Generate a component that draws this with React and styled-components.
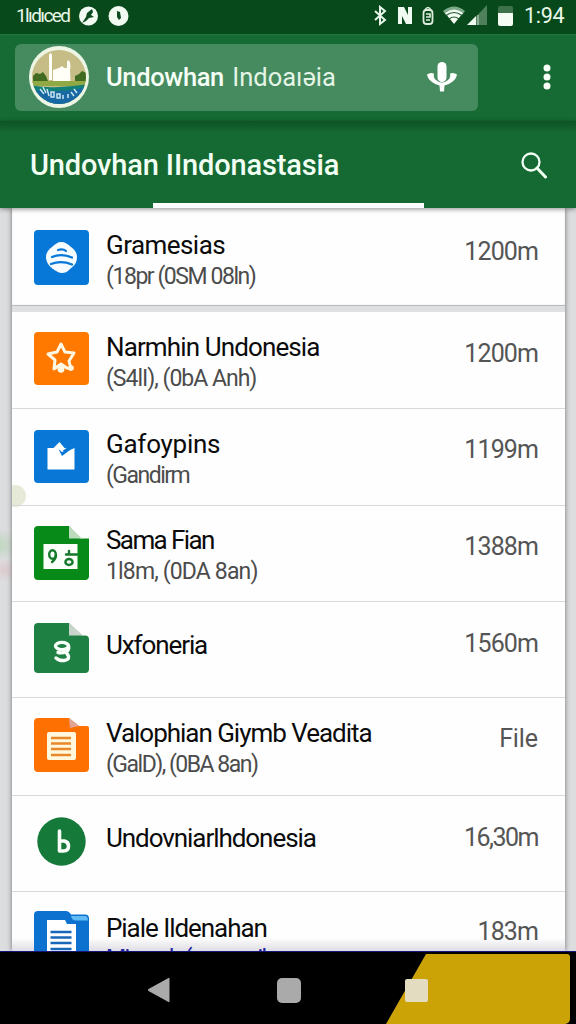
import React from 'react';
import styled, { createGlobalStyle } from 'styled-components';

const GlobalStyle = createGlobalStyle`
    * {
        box-sizing: border-box;
    }
    body {
        margin: 0;
        font-family: Roboto, "Liberation Sans", sans-serif;
        background: #dcdddf;
    }
`;

const files = [
    { icon: 'globe', title: 'Gramesias', sub: '(18pr (0SM 08ln)', size: '1200m', height: 104, track: -0.55, subTrack: -1.45, iconTop: 22, pad: 22, sizeTop: 28, gap: true },
    { icon: 'star', title: 'Narmhin Undonesia', sub: '(S4lI), (0bA Anh)', size: '1200m', height: 97, track: -0.88, subTrack: -1, iconTop: 20 },
    { icon: 'image', title: 'Gafoypins', sub: '(Gandirm', size: '1199m', height: 97, track: -0.25, subTrack: -1.5, iconTop: 21, sizeTop: 25 },
    { icon: 'sheet', title: 'Sama Fian', sub: '1l8m, (0DA 8an)', size: '1388m', height: 96, track: -1.6, subTrack: -0.85, iconTop: 20, pad: 19, sizeTop: 25 },
    { icon: 'script', title: 'Uxfoneria', size: '1560m', height: 96, track: -1.1, iconTop: 21, pad: 28, sizeTop: 26 },
    { icon: 'doc', title: 'Valophian Giymb Veadita', sub: '(GalD), (0BA 8an)', size: 'File', height: 98, track: -1.03, subTrack: -1.5, sizeTrack: -0.1, iconTop: 20, sizeTop: 25 },
    { icon: 'letter', title: 'Undovniarlhdonesia', size: '16,30m', height: 96, track: -1.06, sizeTrack: -1.5, iconTop: 21, pad: 27, sizeTop: 26 },
    { icon: 'folder', title: 'Piale Ildenahan', sub: 'Minamb (man anil', size: '183m', height: 59, track: -1.05, subTrack: -1.6, iconTop: 19, pad: 21, sizeTop: 24, link: true },
];

function FileIcon({ type }) {
    switch (type) {
        case 'globe':
            return (
                <svg width="55" height="55" viewBox="0 0 55 55">
                    <rect width="55" height="55" rx="4" fill="#0878d8" />
                    <path d="M27 12c4 0 7 2 10 5 4 3 6 6 6 10 0 6-3 9-7 12-3 3-5 4-8 4s-6-2-9-4c-4-3-7-7-7-12 0-4 2-7 6-10 3-3 6-5 9-5z" fill="#f6fcff" />
                    <path d="M24 20q5-1.500 8 1M18 27q9-4 20 .5M17 34q10-4 21 .5" fill="none" stroke="#0878d8" strokeWidth="2.200" strokeLinecap="round" />
                </svg>
            );
        case 'star':
            return (
                <svg width="55" height="53" viewBox="0 0 55 53">
                    <rect width="55" height="53" rx="4" fill="#ff7800" />
                    <path d="M27 12l4 8 9 1-5 8 2 8-4-1-6-4-7 5 1-9-7-6 9-2z" fill="none" stroke="#fff8e4" strokeWidth="3" strokeLinejoin="round" />
                    <ellipse cx="27" cy="37" rx="3.500" ry="3.800" fill="#fff8e4" />
                    <circle cx="37" cy="36" r="2.800" fill="#fff8e4" />
                </svg>
            );
        case 'image':
            return (
                <svg width="55" height="53" viewBox="0 0 55 53">
                    <rect width="55" height="53" rx="4" fill="#0877d5" />
                    <path d="M13.500 18h6l6-6 5 6h2l-4 3 3 1 9-4v21.500h-27z" fill="#fff" />
                    <path d="M24.500 19l3.500 3 12-5-12 9z" fill="#0877d5" />
                </svg>
            );
        case 'sheet':
            return (
                <svg width="55" height="54" viewBox="0 0 55 54">
                    <path d="M4 0h31l11 12.500h9V50a4 4 0 0 1-4 4H4a4 4 0 0 1-4-4V4a4 4 0 0 1 4-4z" fill="#078a17" />
                    <path d="M35 0l13 12.500H35z" fill="#bddcbd" />
                    <path d="M9.500 18h34v25h-34z" fill="#fafffa" />
                    <g fill="none" stroke="#15792c" strokeWidth="2.400" strokeLinecap="round">
                        <ellipse cx="18.500" cy="28.500" rx="3.300" ry="4.300" />
                        <path d="M22 29q0 4-4 7" />
                        <path d="M35 25v3M32 28.500h11" />
                        <ellipse cx="35" cy="36" rx="3.600" ry="3" />
                    </g>
                </svg>
            );
        case 'script':
            return (
                <svg width="55" height="50" viewBox="0 0 55 50">
                    <path d="M4 0h31l13 12.500h3a4 4 0 0 1 4 4V46a4 4 0 0 1-4 4H4a4 4 0 0 1-4-4V4a4 4 0 0 1 4-4z" fill="#1e8043" />
                    <path d="M35 0l14 12.500H35z" fill="#c8d5cb" />
                    <g fill="none" stroke="#f8fff9" strokeWidth="3.400" strokeLinecap="round">
                        <ellipse cx="28" cy="23" rx="6.500" ry="3.600" />
                        <path d="M34.500 23q1 4-2.500 6-4 1.500-8 .5M22 35q3 3 8 2.500 5-.5 4.500-4-.5-2-2.500-4" />
                    </g>
                </svg>
            );
        case 'doc':
            return (
                <svg width="55" height="54" viewBox="0 0 55 54">
                    <path d="M4 0h31l10 8h8a2 2 0 0 1 2 2v40a4 4 0 0 1-4 4H4a4 4 0 0 1-4-4V4a4 4 0 0 1 4-4z" fill="#ff7003" />
                    <path d="M35 0l10 8-9 2z" fill="#dfa695" />
                    <rect x="13" y="14" width="29" height="28" rx="2" fill="#fff8dc" />
                    <path d="M17 20h20M17 25.500h20M17 31h20M17 37h20" stroke="#e9872b" strokeWidth="2.300" />
                </svg>
            );
        case 'letter':
            return (
                <svg width="49" height="49" viewBox="0 0 49 49">
                    <circle cx="24.500" cy="24.500" r="24.200" fill="#15793a" />
                    <path d="M22.500 14v20M22.500 24h5q4 1 4 5 0 5-5 5h-4" fill="none" stroke="#f7fff8" strokeWidth="3.600" strokeLinecap="round" strokeLinejoin="round" />
                </svg>
            );
        default:
            return (
                <svg width="55" height="55" viewBox="0 0 55 55">
                    <path d="M4 0h28q3 0 5 3.500h14a4 4 0 0 1 4 4V55H0V4a4 4 0 0 1 4-4z" fill="#0d71cf" />
                    <path d="M37 5h15q2 1 2 4.500H42q-4 0-5-4.500z" fill="#62bbf5" />
                    <path d="M13 9h18l2 4h9v42H13z" fill="#fff" />
                    <path d="M16.500 21h21M16.500 26.500h21M16.500 32h21M16.500 38h21" stroke="#1768b8" strokeWidth="2.300" />
                </svg>
            );
    }
}

function Logo() {
    return (
        <svg width="60" height="62" viewBox="0 0 60 62">
            <defs>
                <clipPath id="logoClip">
                    <circle cx="30" cy="31" r="27" />
                </clipPath>
            </defs>
            <ellipse cx="30" cy="31" rx="30" ry="31" fill="#edf5e4" />
            <g clipPath="url(#logoClip)">
                <rect width="60" height="62" fill="#c6bd86" />
                <path d="M4 35v-5l3-3 4 1 3-2 3 4 2 5zM46 35v-5l4-2 3-3 7 3v7z" fill="#426b22" />
                <path d="M0 35h60v5H0z" fill="#91a944" />
                <path d="M20 9q1.500-4 3 0v25h-3zM24 24l6-2 3-2 2 2h3v-6l1-2 2 2 .5 5-.5 3 .5 11H24z" fill="#fffff8" />
                <path d="M0 39q15 3 30 2t30-3v24H0z" fill="#138078" />
                <path d="M0 42q12 4 28 3 18 0 32-5v24H0z" fill="#1868a3" />
            </g>
            <path d="M11 43l4 5M14 41l3 6M18 43l2 7M22 46h3v5h-3zM28 48h3v4h-3zM34 49v4M39 48v4M42 46l3 4M45 43l3 4" fill="none" stroke="#c9e4ef" strokeWidth="1.500" />
        </svg>
    );
}

function StatusIcons() {
    return (
        <svg width="114" height="22" viewBox="0 0 114 22" fill="none">
            {/* bluetooth */}
            <path d="M1 6l10 9-5 4V2l5 4L1 15" stroke="#e8f4e8" strokeWidth="2" />
            {/* nfc */}
            <path d="M24 2h6l4 8V2h4v17h-6l-4-8v8h-4z" fill="#f0faf0" />
            {/* lock */}
            <rect x="49.500" y="5" width="9" height="14" rx="3" stroke="#dceddc" strokeWidth="1.800" />
            <path d="M51 5q3-5 6 0M52 9h4v3h-4M52 15h4" stroke="#dceddc" strokeWidth="1.600" />
            {/* wifi */}
            <path d="M69 6Q80-3 91 6l-3 4Q80 3 72 10z" fill="#7ca987" />
            <path d="M71 8Q80 1 89 8L80 19z" fill="#f3fbf3" />
            <path d="M72 10.500q8-6 16 0M75 14q5-4 10 0" stroke="#28613a" strokeWidth="1.200" />
            {/* signal */}
            <path d="M113 0v20H94z" fill="#4d805b" />
            <path d="M102 11v9h-9z" fill="#f1faf1" />
            <path d="M104 10v10" stroke="#8eae94" strokeWidth="2" />
        </svg>
    );
}

function App() {
    return (
        <Screen>
            <GlobalStyle />
            <StatusBar>
                <Carrier>1lıdıced</Carrier>
                <svg width="50" height="20" viewBox="0 0 50 20">
                    <circle cx="9.500" cy="10" r="9.500" fill="#f1fbf1" />
                    <path d="M3 17l4-6 1-4 5-4 1 3-2 3 3 2-5 1-3 3z" fill="#0b491e" />
                    <circle cx="39.500" cy="10" r="10" fill="#f1fbf1" />
                    <path d="M38 5l3 1 1 6-2 2-2-3z" fill="#0b491e" />
                </svg>
                <Spacer />
                <StatusIcons />
                <Battery />
                <Clock>1:94</Clock>
            </StatusBar>
            <Toolbar>
                <SearchBox>
                    <Logo />
                    <SearchText>
                        <b>Undowhan</b> Indoaıəia
                    </SearchText>
                    <svg width="30" height="32" viewBox="0 0 30 32">
                        <rect x="10.500" y="1" width="9" height="20" rx="4.500" fill="#fff" />
                        <path d="M0 13.500q3-2.500 7-1-1 4 2 6.500t6 2.500 6-2.500q3-2.500 2-6.500 4-1.500 7 1-1 5-5 7.500-3 2.500-7.500 3.500l-.5 6h-4l-.5-6q-4.500-1-7.500-3.500-4-2.500-5-7.500z" fill="#fff" />
                    </svg>
                </SearchBox>
                <svg width="8" height="26" viewBox="0 0 8 26" fill="#f7fff7">
                    <circle cx="4" cy="4" r="3.500" />
                    <circle cx="4" cy="13" r="3.500" />
                    <circle cx="4" cy="22" r="3.500" />
                </svg>
            </Toolbar>
            <TabBar>
                <TabRow>
                    <TabTitle>Undovhan IIndonastasia</TabTitle>
                    <svg width="26" height="27" viewBox="0 0 26 27" fill="none" stroke="#f1fff3">
                        <circle cx="10" cy="10" r="8.500" strokeWidth="2.300" />
                        <path d="M16 16l8.500 9" strokeWidth="3" strokeLinecap="round" />
                    </svg>
                </TabRow>
                <Indicator />
            </TabBar>
            <Body>
                <List>
                    {files.map((file) => (
                        <Row key={file.title} $height={file.height} $gap={file.gap}>
                            <IconCell $top={file.iconTop}>
                                <FileIcon type={file.icon} />
                            </IconCell>
                            <Info $top={file.pad}>
                                <Title $track={file.track}>{file.title}</Title>
                                {file.sub && (
                                    <Sub $track={file.subTrack} $link={file.link}>
                                        {file.sub}
                                    </Sub>
                                )}
                            </Info>
                            <Size $top={file.sizeTop} $track={file.sizeTrack}>
                                {file.size}
                            </Size>
                        </Row>
                    ))}
                </List>
            </Body>
            <NavBar>
                <NavCorner />
                <svg width="22" height="26" viewBox="0 0 22 26">
                    <path d="M21.500 1.500v23q0 1-1 .5L.5 14q-1-1 0-2l20-11q1-.5 1 .5z" fill="#aaa" />
                </svg>
                <NavHome />
                <NavRecent />
            </NavBar>
        </Screen>
    );
}

const Screen = styled.div`
    width: 576px;
    height: 1024px;
    overflow: hidden;
    display: flex;
    flex-direction: column;
`;

const StatusBar = styled.div`
    height: 34px;
    flex: none;
    display: flex;
    align-items: center;
    padding: 0 10px 3px 16px;
    background: #07491a;
    color: #e9f7e9;
`;

const Carrier = styled.span`
    width: 63px;
    font-size: 19px;
    letter-spacing: -1.6px;
    white-space: nowrap;
`;

const Spacer = styled.div`
    flex: 1;
`;

const Battery = styled.div`
    width: 15px;
    height: 20px;
    margin: 0 11px 0 10px;
    border-radius: 2px;
    background: linear-gradient(#3c7149 35%, #f4fcf4 35%);
`;

const Clock = styled.span`
    width: 42px;
    font-size: 21.5px;
    letter-spacing: -0.3px;
`;

const Toolbar = styled.div`
    height: 87px;
    flex: none;
    display: flex;
    align-items: center;
    justify-content: space-between;
    padding: 0 25px 2px 15px;
    background: #156b33;
    border-top: 1px solid #20773a;
`;

const SearchBox = styled.div`
    width: 463px;
    height: 67px;
    display: flex;
    align-items: center;
    padding: 0 21px 0 14px;
    border-radius: 6px;
    background: #468b5f;
`;

const SearchText = styled.div`
    flex: 1;
    padding-left: 17px;
    font-size: 25.5px;
    color: #e4f5e6;
    white-space: nowrap;
    b {
        font-weight: 500;
        letter-spacing: -0.35px;
        margin-right: 2px;
        color: #f6fff6;
    }
`;

const TabBar = styled.div`
    position: relative;
    z-index: 1;
    height: 87px;
    flex: none;
    display: flex;
    flex-direction: column;
    justify-content: space-between;
    background: linear-gradient(#0e5325, #156933 12px);
    box-shadow: 0 1px 5px rgba(0, 0, 0, 0.45);
`;

const TabRow = styled.div`
    display: flex;
    justify-content: space-between;
    align-items: center;
    padding: 26px 29px 0 30px;
`;

const TabTitle = styled.h1`
    margin: 0;
    font-size: 29px;
    line-height: 36px;
    font-weight: 500;
    letter-spacing: -0.15px;
    color: #f2fff3;
    white-space: nowrap;
`;

const Indicator = styled.div`
    width: 271px;
    height: 5px;
    margin-left: 153px;
    background: #fff;
`;

const Body = styled.div`
    height: 743px;
    flex: none;
    padding: 0 11px 0 12px;
    overflow: hidden;
    background:
        radial-gradient(circle at 0 337px, #c5d8c5 4px, transparent 16px),
        radial-gradient(circle at 5px 362px, #dccdd0 2px, transparent 12px),
        #dcdddf;
`;

const List = styled.div`
    background:
        linear-gradient(transparent 730px, #dddde4 743px),
        radial-gradient(circle at 3px 288px, #e6e9d8 10px, transparent 12px),
        #fefefe;
    box-shadow: 0 0 5px rgba(0, 0, 0, 0.5);
`;

const Row = styled.div`
    height: ${(p) => p.$height}px;
    display: flex;
    align-items: flex-start;
    padding: 0 27px 0 22px;
    overflow: hidden;
    border-bottom: ${(p) => (p.$gap ? '6px solid #dfe0e2' : '1px solid #d9d9dc')};
    box-shadow: ${(p) => (p.$gap ? 'inset 0 -1px 1px #b5b5b8' : 'none')};
    &:last-child {
        border-bottom: none;
    }
`;

const IconCell = styled.div`
    width: 55px;
    display: flex;
    justify-content: center;
    padding-top: ${(p) => p.$top}px;
`;

const Info = styled.div`
    flex: 1;
    padding: ${(p) => p.$top || 20}px 0 0 17px;
    white-space: nowrap;
`;

const Title = styled.div`
    font-size: 26px;
    line-height: 31px;
    letter-spacing: ${(p) => p.$track}px;
    color: #0b0b0b;
`;

const Sub = styled.div`
    padding-top: ${(p) => (p.$link ? 0 : 1)}px;
    font-size: 23px;
    line-height: 30px;
    letter-spacing: ${(p) => p.$track}px;
    color: ${(p) => (p.$link ? '#2422a0' : '#4c4c4c')};
`;

const Size = styled.div`
    padding-top: ${(p) => p.$top || 26}px;
    font-size: 25px;
    line-height: 32px;
    letter-spacing: ${(p) => p.$track || -0.9}px;
    color: #555;
`;

const NavBar = styled.div`
    position: relative;
    flex: 1;
    display: flex;
    align-items: center;
    padding: 4px 0 0 148px;
    background: #000;
    border-top: 1px solid #17147a;
`;

// yellow panel showing through the bottom right corner
const NavCorner = styled.div`
    position: absolute;
    right: 6px;
    top: 2px;
    bottom: 0;
    width: 184px;
    border-radius: 0 3px 5px 0;
    background: #cba307;
    clip-path: polygon(40px 0, 100% 0, 100% 100%, 0 100%);
`;

const NavHome = styled.div`
    width: 24px;
    height: 25px;
    margin-left: 107px;
    border-radius: 5px;
    background: #aaa;
`;

const NavRecent = styled.div`
    position: relative;
    width: 23px;
    height: 23px;
    margin-left: 104px;
    border-radius: 2px;
    background: #e4dcc0;
`;

export default App;
